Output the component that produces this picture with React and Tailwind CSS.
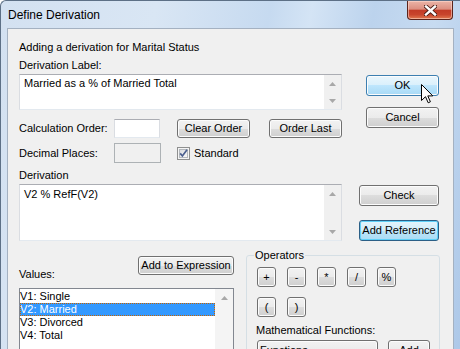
import React from "react";

const BTN_NORMAL =
  "border-[#707070] bg-[linear-gradient(#f2f2f2_0%,#ebebeb_50%,#dddddd_50%,#cfcfcf_100%)] shadow-[inset_0_0_0_1px_#fcfcfc]";
const BTN_HOVER =
  "border-[#3c7fb1] bg-[linear-gradient(#eaf6fd_0%,#d9f0fc_50%,#bee6fd_50%,#a7d9f5_100%)] shadow-[inset_0_0_0_1px_#fcfcfc]";
const BTN_FOCUS =
  "border-[#2b5f86] bg-[linear-gradient(#e3f4fc_0%,#d0edfa_50%,#bde5f8_50%,#aadcf5_100%)] shadow-[inset_0_0_0_1px_#5fd0f8]";

function Btn({ children, className = "", variant = "normal" }) {
  const v = variant === "hover" ? BTN_HOVER : variant === "focus" ? BTN_FOCUS : BTN_NORMAL;
  return (
    <div
      className={`flex shrink-0 items-center justify-center rounded-[3px] border text-[11px] leading-[13px] text-black ${v} ${className}`}
    >
      {children}
    </div>
  );
}

function VScroll({ className = "" }) {
  return (
    <div className={`flex w-[17px] shrink-0 flex-col justify-between bg-[#f0f0f0] ${className}`}>
      <div className="flex h-[17px] items-center justify-center">
        <svg width="7" height="4" viewBox="0 0 7 4">
          <path d="M0 4 L3.5 0 L7 4 Z" fill="#a8a8a8" />
        </svg>
      </div>
      <div className="flex h-[17px] items-center justify-center">
        <svg width="7" height="4" viewBox="0 0 7 4">
          <path d="M0 0 L3.5 4 L7 0 Z" fill="#a8a8a8" />
        </svg>
      </div>
    </div>
  );
}

const BOX =
  "border border-t-[#abadb3] border-l-[#dadde2] border-r-[#dadde2] border-b-[#e3e9ef] bg-white";

function TextArea({ text, className = "", pt = "pt-[2px]" }) {
  return (
    <div className={`flex ${BOX} ${className}`}>
      <div className={`flex-1 pl-[4px] ${pt} text-[11px] leading-[13px] text-black`}>{text}</div>
      <VScroll />
    </div>
  );
}

function Check() {
  return (
    <svg width="13" height="13" viewBox="0 0 13 13" className="shrink-0">
      <defs>
        <linearGradient id="cbg" x1="0" y1="0" x2="1" y2="1">
          <stop offset="0" stopColor="#d8dadd" />
          <stop offset="1" stopColor="#fafafa" />
        </linearGradient>
      </defs>
      <rect x="0.5" y="0.5" width="12" height="12" fill="#f4f4f4" stroke="#8e8f8f" />
      <rect x="2.5" y="2.5" width="8" height="8" fill="url(#cbg)" stroke="#b4b8bd" />
      <path d="M3.2 6.4 L5.4 9 L10 2.8" stroke="#4b5f8f" strokeWidth="1.7" fill="none" />
    </svg>
  );
}

export default function App() {
  const values = ["V1: Single", "V2: Married", "V3: Divorced", "V4: Total"];
  const ops1 = ["+", "-", "*", "/", "%"];
  const ops2 = ["(", ")"];
  return (
    <div className="relative flex h-[349px] w-[460px] flex-col overflow-hidden rounded-tl-[6px] border-l border-t border-[#5d7086] bg-[linear-gradient(100deg,#d3e1f1_0%,#d9e6f4_30%,#c6daf0_52%,#d4e4f5_60%,#bcd3ed_72%,#c7dbf1_84%,#adc8e8_100%)] font-['Liberation_Sans',Arial,sans-serif]">
      {/* Title bar */}
      <div className="flex h-[27px] shrink-0 items-start justify-between">
        <div className="ml-[7px] mt-[7px] text-[12px] leading-[14px] text-black">Define Derivation</div>
        <div className="mr-[7px] flex h-[19px] w-[46px] items-center justify-center rounded-b-[4px] border border-t-0 border-[#5b241b] bg-[linear-gradient(#ebb4a7_0%,#dc8f80_45%,#c23b26_52%,#c8442c_75%,#e0784f_100%)] shadow-[inset_0_0_0_1px_rgba(255,220,210,0.55)]">
          <svg width="13" height="11" viewBox="0 0 13 11">
            <path d="M2 1.5 L11 9.5 M11 1.5 L2 9.5" stroke="#4a1c14" strokeWidth="4.2" strokeLinecap="square" />
            <path d="M2 1.5 L11 9.5 M11 1.5 L2 9.5" stroke="#ffffff" strokeWidth="2.4" strokeLinecap="square" />
          </svg>
        </div>
      </div>

      {/* Body with frames */}
      <div className="flex min-h-0 flex-1 px-[6px]">
        <div className="flex min-w-0 flex-1 flex-col border-l border-r border-t border-[#a4b1c1] bg-[#f0f0f0] pl-[11px] text-[11px] leading-[13px] text-black">
          {/* Top section */}
          <div className="flex items-start">
            <div className="flex w-[323px] shrink-0 flex-col">
              <div className="mt-[12px] h-[13px] whitespace-nowrap">Adding a derivation for Marital Status</div>
              <div className="mt-[5px] h-[13px] whitespace-nowrap">Derivation Label:</div>
              <TextArea className="mt-[2px] h-[36px]" text="Married as a % of Married Total" pt="pt-[2px]" />
              <div className="mt-[8px] flex h-[20px] items-center">
                <span className="w-[95px] shrink-0 whitespace-nowrap">Calculation Order:</span>
                <div className={`h-[19px] w-[46px] shrink-0 ${BOX}`} />
                <Btn className="ml-[17px] h-[19px] w-[73px]">Clear Order</Btn>
                <Btn className="ml-[19px] h-[19px] w-[73px]">Order Last</Btn>
              </div>
              <div className="mt-[5px] flex h-[20px] items-center">
                <span className="w-[95px] shrink-0 whitespace-nowrap">Decimal Places:</span>
                <div className="h-[20px] w-[47px] shrink-0 border border-[#adb2b5] bg-[#f0f0f0]" />
                <div className="ml-[16px]">
                  <Check />
                </div>
                <span className="ml-[4px]">Standard</span>
              </div>
              <div className="mt-[6px] h-[13px]">Derivation</div>
              <TextArea className="mt-[2px] h-[57px]" text="V2 % RefF(V2)" pt="pt-[3px]" />
            </div>
            <div className="ml-[17px] flex w-[80px] shrink-0 flex-col">
              <Btn variant="hover" className="ml-[7px] mt-[46px] h-[21px] w-[73px]">OK</Btn>
              <Btn className="ml-[7px] mt-[11px] h-[21px] w-[73px]">Cancel</Btn>
              <Btn className="mt-[57px] h-[21px] w-[80px]">Check</Btn>
              <Btn variant="focus" className="mt-[14px] h-[21px] w-[80px]">Add Reference</Btn>
            </div>
          </div>

          {/* Bottom section */}
          <div className="flex items-start">
            <div className="flex w-[215px] shrink-0 flex-col">
              <div className="mt-[15px] flex h-[25px] justify-between">
                <span className="self-end">Values:</span>
                <Btn className="h-[19px] w-[96px]">Add to Expression</Btn>
              </div>
              <div className="mt-[7px] flex h-[80px] border border-[#828790] bg-white">
                <div className="min-w-0 flex-1 pt-[1px]">
                  {values.map((v, i) =>
                    i === 1 ? (
                      <div
                        key={v}
                        className="h-[13px] whitespace-nowrap bg-[#3399ff] text-white outline-1 -outline-offset-1 outline-dotted outline-[#c86400]"
                      >
                        {v}
                      </div>
                    ) : (
                      <div key={v} className="h-[13px] whitespace-nowrap">
                        {v}
                      </div>
                    )
                  )}
                </div>
                <div className="flex w-[18px] shrink-0 flex-col bg-[#f4f4f4]">
                  <div className="flex h-[17px] items-center justify-center">
                    <svg width="7" height="4" viewBox="0 0 7 4">
                      <path d="M0 4 L3.5 0 L7 4 Z" fill="#a8a8a8" />
                    </svg>
                  </div>
                </div>
              </div>
            </div>

            <div className="ml-[12px] w-[194px] shrink-0">
              <div className="relative mt-[14px] h-[110px] rounded-[3px] border border-[#d5dfe5] pl-[10px] pt-[11px]">
                <span className="absolute -top-[7px] left-[7px] bg-[#f0f0f0] px-px leading-[13px]">Operators</span>
                <div className="flex gap-[11px]">
                  {ops1.map((o) => (
                    <Btn key={o} className="h-[20px] w-[19px]">
                      {o}
                    </Btn>
                  ))}
                </div>
                <div className="mt-[10px] flex gap-[11px]">
                  {ops2.map((o) => (
                    <Btn key={o} className="h-[20px] w-[19px]">
                      {o}
                    </Btn>
                  ))}
                </div>
                <div className="-ml-px mt-[7px] h-[13px] whitespace-nowrap">Mathematical Functions:</div>
                <div className="mt-[3px] flex items-start">
                  <div className={`flex h-[21px] w-[121px] items-center rounded-[3px] border pl-[2px] ${BTN_NORMAL}`}>
                    Functions
                  </div>
                  <Btn className="ml-[10px] h-[21px] w-[42px]">Add</Btn>
                </div>
              </div>
            </div>
          </div>
        </div>
      </div>

      {/* Mouse cursor */}
      <svg className="absolute left-[420px] top-[83px]" width="13" height="20" viewBox="0 0 13 20">
        <path
          d="M0.5 0.5 L0.5 16.5 L4.5 12.7 L7.2 18.8 L9.4 17.8 L6.8 11.9 L11.8 11.9 Z"
          fill="#ffffff"
          stroke="#000000"
          strokeWidth="1"
          strokeLinejoin="miter"
        />
      </svg>
    </div>
  );
}
